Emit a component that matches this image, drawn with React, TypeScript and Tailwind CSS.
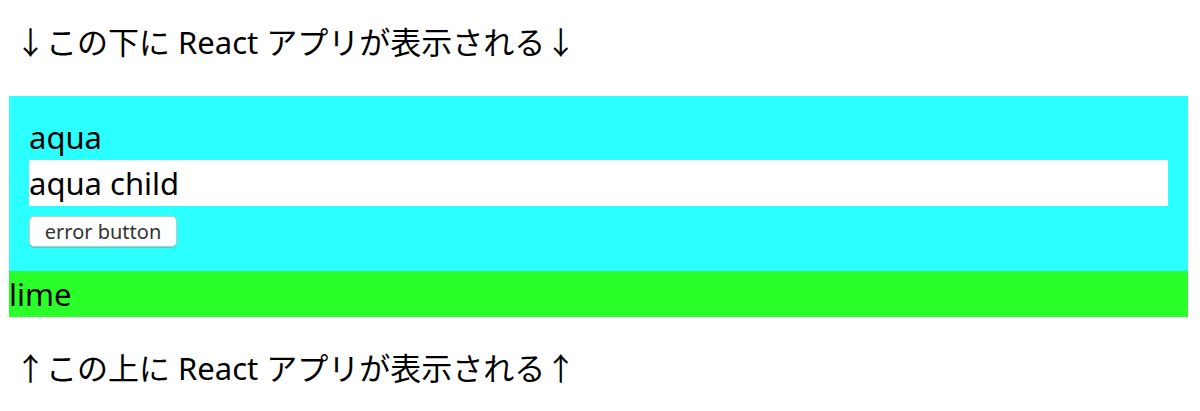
export default function App() {
  return (
    <div className="min-h-screen bg-white pl-[9px] pr-[12px] text-[31px] leading-[46px] text-black [font-family:'Noto_Sans','Noto_Sans_CJK_JP',sans-serif]">
      <p className="pt-[19px] pl-[6px]">↓この下に React アプリが表示される↓</p>

      <div className="mt-[31px]">
        {/* aqua parent */}
        <div className="bg-[#2bffff] px-[20px] pt-[18px] pb-[24px]">
          <div>aqua</div>
          <div className="bg-white">aqua child</div>
          <button
            type="button"
            className="mt-[10px] block h-[31px] w-[148px] rounded-[5px] border border-[#c8c8c8] bg-white text-[20px] leading-none text-[#333] shadow-[0_1px_1px_rgba(0,0,0,0.15)]"
          >
            error button
          </button>
        </div>

        {/* lime sibling */}
        <div className="bg-[#2aff2a]">lime</div>
      </div>

      <p className="mt-[28px] pl-[6px]">↑この上に React アプリが表示される↑</p>
    </div>
  )
}
